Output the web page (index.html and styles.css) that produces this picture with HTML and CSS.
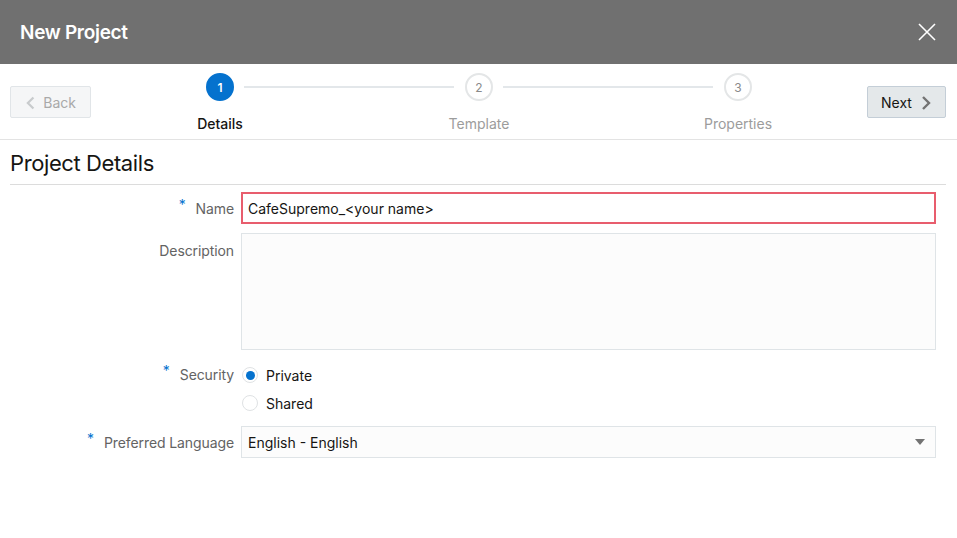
FILE: index.html
```html
<!DOCTYPE html>
<html lang="en">
<head>
<meta charset="utf-8">
<title>New Project</title>
<link rel="stylesheet" href="styles.css">
</head>
<body>
<div class="dialog">
  <header class="dlg-header">
    <h1 class="dlg-title">New Project</h1>
    <button class="close-btn" aria-label="Close">
      <svg width="18" height="18" viewBox="0 0 18 18"><path d="M1 1 L17 17 M17 1 L1 17" stroke="#fff" stroke-width="1.6" fill="none"/></svg>
    </button>
  </header>

  <div class="wizard-bar">
    <button class="nav-btn back" disabled>
      <svg width="10" height="14" viewBox="0 0 10 14"><path d="M8 1 L2 7 L8 13" stroke="#c8cbcd" stroke-width="2.4" fill="none"/></svg>
      <span>Back</span>
    </button>
    <div class="train-area">
      <div class="train">
        <div class="step active">
          <div class="circle">1</div>
          <div class="step-label"><span>Details</span></div>
        </div>
        <div class="connector"></div>
        <div class="step">
          <div class="circle">2</div>
          <div class="step-label"><span>Template</span></div>
        </div>
        <div class="connector"></div>
        <div class="step">
          <div class="circle">3</div>
          <div class="step-label"><span>Properties</span></div>
        </div>
      </div>
    </div>
    <button class="nav-btn next">
      <span>Next</span>
      <svg width="10" height="14" viewBox="0 0 10 14"><path d="M2 1 L8 7 L2 13" stroke="#737373" stroke-width="2.4" fill="none"/></svg>
    </button>
  </div>

  <section class="content">
    <h2 class="section-title">Project Details</h2>
    <div class="form">
      <label class="lbl req row-name">Name</label>
      <div class="ctl row-name"><div class="input invalid">CafeSupremo_&lt;your name&gt;</div></div>

      <label class="lbl row-desc">Description</label>
      <div class="ctl row-desc"><div class="textarea"></div></div>

      <label class="lbl req row-sec">Security</label>
      <div class="ctl row-sec">
        <div class="radio-group">
          <div class="radio-item"><span class="radio checked"></span><span>Private</span></div>
          <div class="radio-item"><span class="radio"></span><span>Shared</span></div>
        </div>
      </div>

      <label class="lbl req row-lang">Preferred Language</label>
      <div class="ctl row-lang">
        <div class="select"><span>English - English</span><span class="caret"></span></div>
      </div>
    </div>
  </section>
</div>
</body>
</html>
```

FILE: styles.css
```css
* { box-sizing: border-box; }
html, body { margin: 0; padding: 0; background: #fff; }
body {
  font-family: Inter, "Helvetica Neue", "Liberation Sans", Arial, sans-serif;
  color: #161513;
  font-size: 14px;
  width: 957px;
  height: 538px;
  overflow: hidden;
}
.dlg-header {
  height: 64px;
  background: #707070;
  display: flex;
  align-items: center;
  justify-content: space-between;
  padding: 0 20px;
}
.dlg-title {
  margin: 0;
  color: #fff;
  font-size: 19px;
  font-weight: 600;
  letter-spacing: -0.3px;
}
.close-btn {
  border: 0;
  background: transparent;
  padding: 0;
  width: 18px;
  height: 18px;
  display: flex;
  margin-right: 1px;
}
.wizard-bar {
  height: 76px;
  border-bottom: 1px solid #e3e3e3;
  display: flex;
  align-items: center;
  padding: 0 11px 0 10px;
}
.nav-btn {
  height: 32px;
  border-radius: 2px;
  display: flex;
  align-items: center;
  gap: 8px;
  font-family: inherit;
  font-size: 14px;
  padding: 1px 14px 0;
  margin-top: 1px;
}
.nav-btn.back {
  width: 81px;
  background: #f5f6f7;
  border: 1px solid #e1e5e8;
  color: #a9a9a9;
  padding-left: 15px;
}
.nav-btn.next {
  width: 79px;
  background: #e4e8ea;
  border: 1px solid #c4ced7;
  color: #161513;
  padding-left: 13px;
  gap: 9px;
}
.train-area {
  flex: 1;
  display: flex;
  justify-content: center;
  align-self: flex-start;
  padding-top: 9px;
}
.train {
  width: 546px;
  display: flex;
  align-items: flex-start;
}
.step {
  width: 28px;
  display: flex;
  flex-direction: column;
  align-items: center;
}
.circle {
  width: 28px;
  height: 28px;
  border-radius: 50%;
  border: 2px solid #e4e6e7;
  background: #fff;
  color: #8a8a8a;
  font-size: 12px;
  display: flex;
  align-items: center;
  justify-content: center;
}
.step.active .circle {
  background: #0572ce;
  border-color: #0572ce;
  color: #fff;
  font-weight: 600;
}
.step-label {
  width: 28px;
  display: flex;
  justify-content: center;
  margin-top: 14px;
  white-space: nowrap;
  font-size: 14px;
  line-height: 17px;
  color: #9c9c9c;
}
.step.active .step-label { color: #161513; font-weight: 500; }
.connector {
  flex: 1;
  height: 2px;
  background: #e3e7ea;
  margin: 13px 11px 0 10px;
}
.content { padding: 0; }
.section-title {
  margin: 0 11px 0 10px;
  padding: 10px 0 8px;
  font-size: 22px;
  font-weight: 400;
  line-height: 26px;
  border-bottom: 1px solid #dcdcdc;
  letter-spacing: -0.4px;
}
.form {
  display: grid;
  grid-template-columns: 234px 695px;
  column-gap: 7px;
  padding-top: 7px;
}
.lbl {
  color: #636363;
  font-size: 14px;
  text-align: right;
  line-height: 17px;
  letter-spacing: -0.1px;
}
.lbl.req::before {
  content: "*";
  color: #0572ce;
  font-size: 14px;
  margin-right: 10px;
  position: relative;
  top: -4px;
}
.row-name.lbl { padding-top: 8px; }
.row-desc { margin-top: 9px; }
.row-desc.lbl { padding-top: 9px; }
.row-sec { margin-top: 17px; }
.row-sec.lbl { margin-top: 15px; padding-top: 1px; }
.row-lang { margin-top: 15px; }
.row-lang.lbl { padding-top: 8px; }
.input {
  height: 32px;
  border: 1px solid #dfe4e7;
  background: #fff;
  padding: 0 6px;
  display: flex;
  align-items: center;
  font-size: 14px;
  color: #161513;
}
.input.invalid { border: 2px solid #e85d6d; padding: 0 5px; }
.textarea {
  height: 117px;
  border: 1px solid #dfe4e7;
  background: #fcfcfc;
}
.radio-group { display: flex; flex-direction: column; gap: 12px; }
.radio-item {
  display: flex;
  align-items: center;
  gap: 8px;
  height: 16px;
  font-size: 14px;
  padding-left: 1px;
}
.radio {
  width: 16px;
  height: 16px;
  border-radius: 50%;
  border: 1px solid #dfe2e4;
  background: #fff;
  display: inline-flex;
  align-items: center;
  justify-content: center;
}
.radio.checked::after {
  content: "";
  width: 9px;
  height: 9px;
  border-radius: 50%;
  background: #0572ce;
}
.select {
  height: 32px;
  border: 1px solid #dfe4e7;
  background: #fcfcfc;
  display: flex;
  align-items: center;
  justify-content: space-between;
  padding: 0 10px 0 6px;
  font-size: 14px;
}
.caret {
  width: 0;
  height: 0;
  border-left: 5px solid transparent;
  border-right: 5px solid transparent;
  border-top: 6px solid #737373;
}
```
